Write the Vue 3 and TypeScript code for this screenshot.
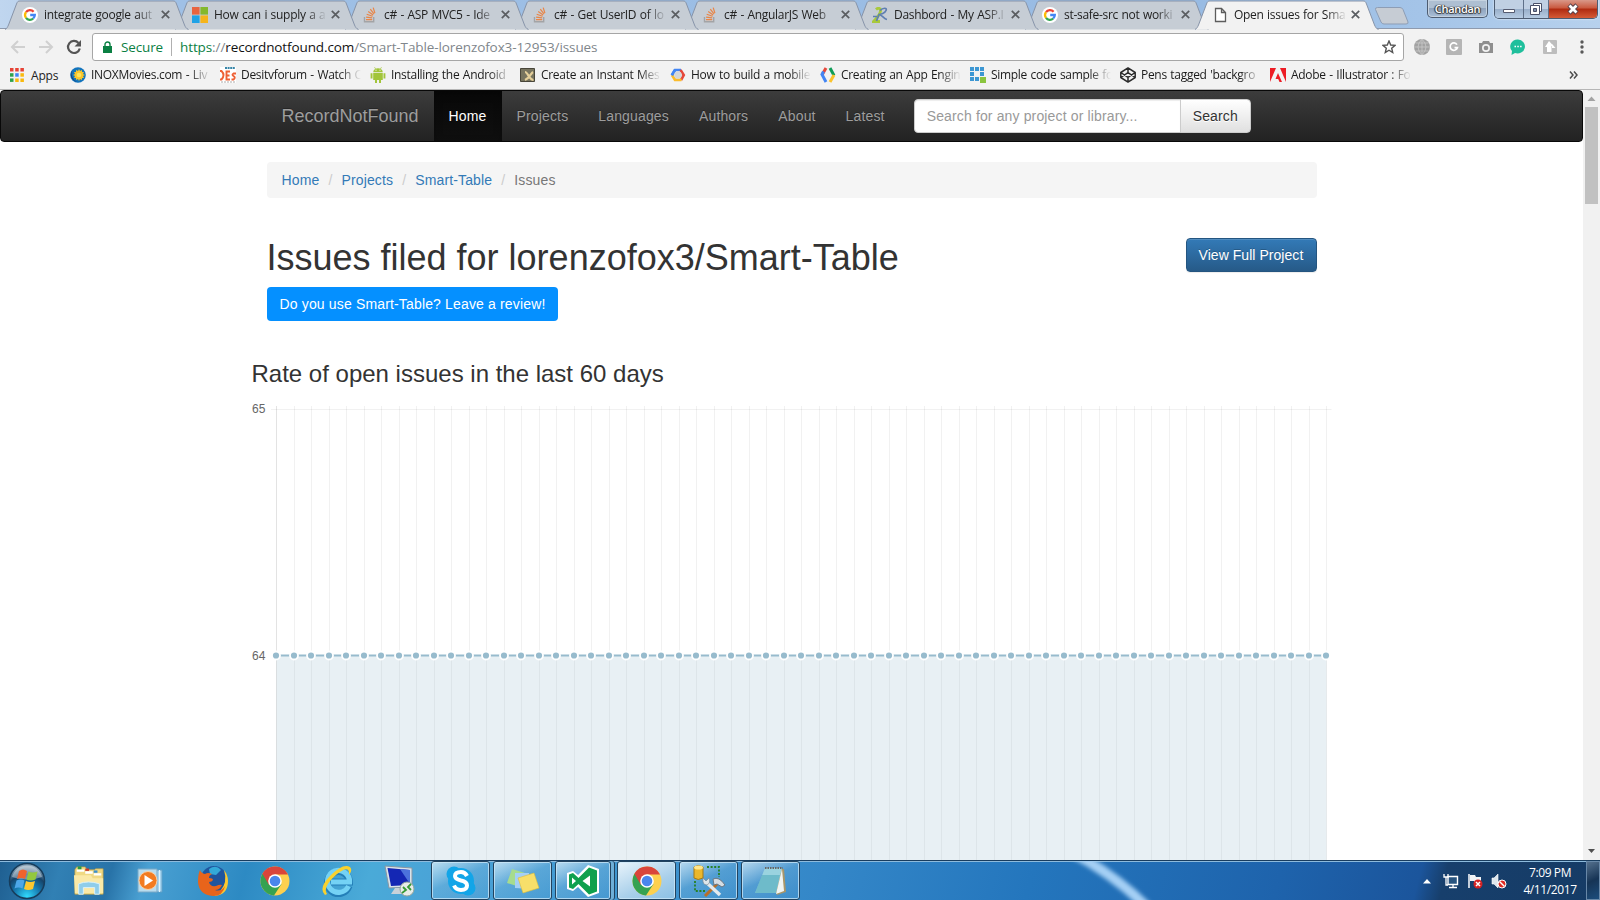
<script setup lang="ts">
interface Tab { icon: string; title: string }
interface Mark { icon: string; title: string }

const tabs: Tab[] = [
  { icon: 'google', title: 'integrate google aut' },
  { icon: 'ms', title: 'How can i supply a a' },
  { icon: 'so', title: 'c# - ASP MVC5 - Ide' },
  { icon: 'so', title: 'c# - Get UserID of lo' },
  { icon: 'so', title: 'c# - AngularJS Web' },
  { icon: 'dash', title: 'Dashbord - My ASP.I' },
  { icon: 'google', title: 'st-safe-src not worki' },
  { icon: 'page', title: 'Open issues for Sma' },
]
const marks: Mark[] = [
  { icon: 'inox', title: 'INOXMovies.com - Liv' },
  { icon: 'des', title: 'Desitvforum - Watch C' },
  { icon: 'android', title: 'Installing the Android' },
  { icon: 'xmark', title: 'Create an Instant Mes' },
  { icon: 'gcloud', title: 'How to build a mobile' },
  { icon: 'gdev', title: 'Creating an App Engin' },
  { icon: 'simple', title: 'Simple code sample fo' },
  { icon: 'codepen', title: "Pens tagged 'backgro" },
  { icon: 'adobe', title: 'Adobe - Illustrator : Fo' },
]
const nav = ['Home', 'Projects', 'Languages', 'Authors', 'About', 'Latest']
const points = Array.from({ length: 61 }, (_, i) => Math.round(24 + i * 17.5))
</script>

<template>
  <div class="screen">
    <svg class="defs" width="0" height="0">
      <defs>
        <symbol id="google" viewBox="0 0 16 16">
          <circle cx="8" cy="8" r="8" fill="#fff" />
          <g fill="none" stroke-width="2.3">
            <path d="M4 5.2A4.8 4.8 0 0 1 11.6 4.7" stroke="#ea4335" />
            <path d="M4 5.2A4.8 4.8 0 0 0 4 10.8" stroke="#fbbc05" />
            <path d="M4 10.8A4.8 4.8 0 0 0 11.2 11.5" stroke="#34a853" />
            <path d="M11.2 11.5A4.8 4.8 0 0 0 12.8 8H8.2" stroke="#4285f4" />
          </g>
        </symbol>
        <symbol id="ms" viewBox="0 0 16 16">
          <path d="M0 0h7.6v7.6H0z" fill="#e8643f" /><path d="M8.4 0H16v7.6H8.4z" fill="#84b82c" />
          <path d="M0 8.4h7.6V16H0z" fill="#1fa2e6" /><path d="M8.4 8.4H16V16H8.4z" fill="#f5b41b" />
        </symbol>
        <symbol id="so" viewBox="0 0 16 16">
          <path d="M2.5 10v4.8h9.2V10" fill="none" stroke="#a3a4a6" stroke-width="1.4" />
          <path d="M4 12.7h6.2M4.1 10.1l6.1.8M4.7 7.3l5.9 1.9M6.2 4.5l5 3.4M8.3 2.2l3.7 4.7M11.2.6l1.7 5.5" stroke="#e98546" stroke-width="1.2" />
        </symbol>
        <symbol id="dash" viewBox="0 0 16 16">
          <path d="M4 2.500c2-2 5-1.500 4.500 1.500C8 8 5 11 1.500 14.500L8 14.500" fill="none" stroke="#a8c93b" stroke-width="2.800" />
          <path d="M8 3.500C11 .5 15.500.5 14 3.500 13 6 9 7.500 6.500 7.500M1 9.500h4M8 8c2 0 4 4 7 4.500M7 7.500L4.500 14" fill="none" stroke="#5f7fb0" stroke-width="1.700" />
        </symbol>
        <symbol id="page" viewBox="0 0 16 16">
          <path d="M3.5 1.5h6l4 4v9h-10zM9.5 1.5v4h4" fill="#fff" stroke="#5d5d5d" stroke-width="1.3" />
        </symbol>
        <symbol id="inox" viewBox="0 0 16 16">
          <circle cx="8" cy="8" r="7.8" fill="#1374bd" /><path d="M2 3a8 8 0 0 0 5 12A10 10 0 0 1 2 3" fill="#173c74" />
          <path d="M9 2l1 2 2-1 0 2 2 0-1 2 2 1-2 1 1 2-2 0 0 2-2-1-1 2-1-2-2 1 0-2-2 0 1-2-2-1 2-1-1-2 2 0 0-2 2 1z" fill="#f8c52b" />
          <circle cx="9" cy="8" r="2.3" fill="#ffe45a" />
        </symbol>
        <symbol id="des" viewBox="0 0 16 16">
          <path d="M0 0h16v16H0z" fill="#fff" />
          <path d="M5 1h10" stroke="#3685a8" stroke-width="2" stroke-dasharray="2 .6" />
          <g fill="none" stroke="#ee6035" stroke-width="1.900">
            <path d="M0 4h1.500Q5.500 8 1.500 12.500H0M10 4.500H6.500v8H10M6.500 8.500h3M16 6.500h-2.500q-2 1 0 2.500 2.500 1.500 0 3.500H11.500" />
          </g>
          <path d="M1 15h14" stroke="#aaa" stroke-dasharray="2 1" />
        </symbol>
        <symbol id="android" viewBox="0 0 16 16">
          <path d="M3.2 5.3C3.4 0 12.600 0 12.800 5.300zM3.200 6h9.600v7H3.200zM5 12h2v4H5zM9 12h2v4H9zM.6 6.200h1.900v5.400H.6zM13.500 6.200h1.900v5.400h-1.900z" fill="#a2c53a" />
          <path d="M4.500.2l1.300 2M11.500.2l-1.300 2" stroke="#a2c53a" stroke-width=".7" />
          <path d="M5.500 3.200h1M9.500 3.200h1" stroke="#fff" />
        </symbol>
        <symbol id="xmark" viewBox="0 0 16 16">
          <path d="M.5 1.500h14v13H.5z" fill="#77745f" stroke="#49463a" /><path d="M5 5c3 0 4 8 8.500 8M13 5c-2 1-3 6-8 8" fill="none" stroke="#e4cf9a" stroke-width="2.200" />
        </symbol>
        <symbol id="gcloud" viewBox="0 0 16 16">
          <g fill="none" stroke-width="2.700"><path d="M2 8l3-5h6" stroke="#4285f4" /><path d="M10.500 3.100L13.700 8 11 13" stroke="#e5473a" /><path d="M11.500 12.900H5L2 8" stroke="#fbbc2c" /><path d="M1.800 8.400L5 3" stroke="#4285f4" /></g>
          <circle cx="8" cy="8" r="3.800" fill="#d5d7d9" />
        </symbol>
        <symbol id="gdev" viewBox="0 0 16 16">
          <g fill="none" stroke-width="3"><path d="M6 1L2 8" stroke="#e5473a" /><path d="M3.500 4.500L2 7.500 6 15" stroke="#4285f4" /><path d="M10 1l4 7.500" stroke="#0f9d58" /><path d="M14 8l-4 7" stroke="#fbc32c" /></g>
        </symbol>
        <symbol id="simple" viewBox="0 0 16 16">
          <path d="M0 0h4v4H0zM5 0h4v4H5zM10 0h4v4h-4zM0 5h4v4H0zM10 5h4v4h-4zM0 10h4v4H0zM5 10h4v4H5z" fill="#3c97d3" /><path d="M10 10h6v6h-6z" fill="#8bc53f" />
        </symbol>
        <symbol id="codepen" viewBox="0 0 16 16">
          <path d="M8 .9l7.200 4.600v5L8 15.100.8 10.500v-5zM8 .9v4.800M8 15.100v-4.800M.8 5.500L8 10.300l7.200-4.800M.8 10.500L8 5.700l7.200 4.800" fill="none" stroke="#2b2b2b" stroke-width="1.500" stroke-linejoin="round" />
        </symbol>
        <symbol id="adobe" viewBox="0 0 16 16">
          <path d="M0 1h6L0 15zM10 1h6v14zM8 6l4 9H9.500l-1.300-3H5.500z" fill="#ed1c24" />
        </symbol>
        <symbol id="chrome" viewBox="0 0 30 30">
          <circle cx="15" cy="15" r="14.500" fill="#fdd04f" />
          <path d="M15 15L2.400 7.800A14.500 14.500 0 0 0 14 29.500L21.500 18z" fill="#35a251" />
          <path d="M2.400 7.800A14.500 14.500 0 0 1 28 8.500H15L9 19z" fill="#d9453b" />
          <circle cx="15" cy="15" r="6.800" fill="#fff" /><circle cx="15" cy="15" r="5.300" fill="#4a86ec" />
        </symbol>
      </defs>
    </svg>

    <header class="titlebar">
      <ul class="tabs">
        <li v-for="(t, i) in tabs" :key="i" class="tab" :class="{ active: i === 7 }" :style="{ zIndex: i === 7 ? 20 : 10 - i }">
          <svg class="shape" width="184" height="29" viewBox="0 0 184 29">
            <path class="fill" d="M0 29.500C2 28.500 2.500 27 3.500 25L11.500 4C12.500 1.500 13 1 15 1H168C170 1 170.500 1.500 171.500 4L179.500 25C180.500 27 181 28.500 183.500 29.500" />
          </svg>
          <svg class="fav"><use :href="'#' + t.icon" /></svg>
          <span class="fade tab-title">{{ t.title }}</span>
          <svg class="close" viewBox="0 0 9 9"><path d="M.8.800l7.400 7.400M8.200.8L.8 8.200" stroke="#5b5e62" stroke-width="1.700" /></svg>
        </li>
      </ul>
      <svg class="newtab" width="36" height="20" viewBox="0 0 36 20"><path d="M3.500 1.500H26Q28 1.500 29 3.500L34 16Q34.500 18 32 18H10Q8 18 7 16L1.500 3.500Q1 1.500 3.500 1.500Z" fill="#c6ccd4" stroke="#8d9db5" /></svg>
      <div class="user">Chandan</div>
      <div class="winctl">
        <span class="wc"><svg width="14" height="12"><path d="M1.500 6.500h11v3h-11z" fill="#fff" stroke="#555b70" /></svg></span>
        <span class="wc mid"><svg width="14" height="14"><path d="M4.500 1.500h8v8h-8z" fill="#fff" stroke="#4a5068" /><path d="M1.500 3.500h9v9h-9z" fill="#fff" stroke="#4a5068" /><path d="M4.500 6.500h3v3h-3z" fill="#8191ad" stroke="#4a5068" /></svg></span>
        <span class="wc red"><svg width="14" height="12"><path d="M3 2l8 8M11 2l-8 8" stroke="#57414a" stroke-width="4.600" /><path d="M3.500 2.500l7 7M10.500 2.500l-7 7" stroke="#fff" stroke-width="2.800" /></svg></span>
      </div>
    </header>

    <div class="toolbar">
      <svg class="navicons" width="92" height="30" viewBox="0 0 92 30">
        <path d="M25 15H12.500M18 9l-6 6 6 6M39 15h12.500M46 9l6 6-6 6" fill="none" stroke="#d0d0d0" stroke-width="2" />
        <path d="M78.500 11A6 6 0 1 0 79.800 16.500" fill="none" stroke="#545454" stroke-width="2.200" /><path d="M81 8v6.500h-6.500z" fill="#545454" />
      </svg>
      <div class="address">
        <svg class="lock" width="9" height="12" viewBox="0 0 9 12"><path d="M0 5h9v7H0z" fill="#0b8043" /><path d="M2 6V3.500a2.500 2.500 0 0 1 5 0V6" fill="none" stroke="#0b8043" stroke-width="1.400" /></svg>
        <span class="secure">Secure</span>
        <span class="url"><i>https</i>://<b>recordnotfound.com</b>/Smart-Table-lorenzofox3-12953/issues</span>
        <svg class="star" width="14" height="14" viewBox="0 0 14 14"><path d="M7 1l1.700 4 4.300.4-3.300 2.800 1 4.300L7 10.200l-3.700 2.300 1-4.300L1 5.400 5.300 5z" fill="none" stroke="#555" stroke-width="1.400" /></svg>
      </div>
      <div class="ext">
        <svg viewBox="0 0 16 16"><circle cx="8" cy="8" r="8" fill="#a2a2a2" /><path d="M0 8h16M8 0v16M1.500 4h13M1.500 12h13M8 0q-8 8 0 16M8 0q8 8 0 16" stroke="#c9c9c9" stroke-width=".8" fill="none" /></svg>
        <svg viewBox="0 0 16 16"><rect width="16" height="16" rx="1" fill="#b5b5b5" /><path d="M11 5.600A3.700 3.700 0 1 0 11.400 8.700H8.500" stroke="#fff" stroke-width="1.700" fill="none" /></svg>
        <svg viewBox="0 0 16 16"><path d="M1 4h3l1-2h6l1 2h3v10H1z" fill="#8f8f8f" /><circle cx="8" cy="9" r="4" fill="#f2f2f2" /><circle cx="8" cy="9" r="2.300" fill="#8f8f8f" /></svg>
        <svg viewBox="0 0 16 16"><path d="M8 .5a7.500 7 0 1 1-3 13.600L1.500 16l.5-4A7.300 7 0 0 1 8 .5" fill="#1fbf9c" /><path d="M4.500 7.500h1.500M7.300 7.500h1.500M10.100 7.500h1.500" stroke="#fff" stroke-width="1.500" /></svg>
        <svg viewBox="0 0 16 16"><rect x="1" y="1" width="14" height="14" rx="1" fill="#bdbdbd" /><path d="M7 2l4.500 5H9.500v6H5V8H3z" fill="#fff" /><path d="M10 5l3.500 4H10z" fill="#fff" /></svg>
        <svg viewBox="0 0 16 16"><g fill="#595959"><circle cx="8" cy="3" r="1.700" /><circle cx="8" cy="8" r="1.700" /><circle cx="8" cy="13" r="1.700" /></g></svg>
      </div>
    </div>

    <div class="bookmarks">
      <svg class="apps" width="14" height="14" viewBox="0 0 14 14">
        <path d="M0 0h3.500v3.500H0zM5.200 0h3.500v3.500H5.200zM10.400 0h3.500v3.500h-3.500z" fill="#e64235" />
        <path d="M0 5.200h3.500v3.500H0z" fill="#2fa24c" /><path d="M5.200 5.200h3.500v3.500H5.200z" fill="#4285f4" /><path d="M10.400 5.200h3.500v3.500h-3.500z" fill="#f9b90d" />
        <path d="M0 10.400h3.500v3.500H0z" fill="#2fa24c" /><path d="M5.200 10.400h3.500v3.500H5.200zM10.400 10.400h3.500v3.500h-3.500z" fill="#f9b90d" />
      </svg>
      <span class="apps-label">Apps</span>
      <div v-for="m in marks" :key="m.title" class="mark">
        <svg class="fav"><use :href="'#' + m.icon" /></svg>
        <span class="fade mark-title">{{ m.title }}</span>
      </div>
      <svg class="more" width="9" height="8" viewBox="0 0 9 8"><path d="M1 .5L4 4 1 7.500M5 .5L8 4 5 7.500" fill="none" stroke="#4c4c4c" stroke-width="1.500" /></svg>
    </div>

    <div class="viewport">
      <main class="page">
        <nav class="navbar">
          <div class="container">
            <a class="brand">RecordNotFound</a>
            <a v-for="(n, i) in nav" :key="n" class="navlink" :class="{ on: i === 0 }">{{ n }}</a>
            <form class="search"><div class="input">Search for any project or library...</div><div class="go">Search</div></form>
          </div>
        </nav>
        <div class="container col">
          <ol class="crumb"><li><a>Home</a></li><li><a>Projects</a></li><li><a>Smart-Table</a></li><li>Issues</li></ol>
          <div class="head"><h1>Issues filed for lorenzofox3/Smart-Table</h1><a class="btn primary">View Full Project</a></div>
          <a class="btn review">Do you use Smart-Table? Leave a review!</a>
          <h3>Rate of open issues in the last 60 days</h3>
          <svg class="chart" width="1090" height="460" viewBox="0 0 1090 460">
            <g stroke="#000" stroke-opacity=".055">
              <path v-for="x in points" :key="x" :d="`M${x + 0.5} 6V460`" />
              <path d="M19 9.500H1079.500M24.500 6V460" />
            </g>
            <path d="M24.500 255.500H1074.500V460H24.500z" fill="#97bbcd" fill-opacity=".22" />
            <path d="M24 255.500H1074" stroke="#97bbcd" stroke-width="2" />
            <circle v-for="x in points" :key="x" :cx="x" cy="255.500" r="4" fill="#97bbcd" stroke="#fff" stroke-width="1.800" />
            <g class="axis"><text x="0" y="13">65</text><text x="0" y="260">64</text></g>
          </svg>
        </div>
      </main>
      <div class="scroll">
        <svg width="17" height="17"><path d="M4.500 11L8.500 6.500 12.500 11z" fill="#a3a3a3" /></svg>
        <div class="thumb"></div>
        <svg width="17" height="17"><path d="M5 6L8.500 10 12 6z" fill="#505050" /></svg>
      </div>
    </div>

    <footer class="taskbar">
      <svg class="sweep" width="500" height="40"><defs><filter id="soft"><feGaussianBlur stdDeviation="2" /></filter></defs><path d="M60 -10Q105 14 137 46" fill="none" stroke="#a5d0f5" stroke-width="10" filter="url(#soft)" /></svg>
      <div class="launch">
        <svg class="start" width="38" height="38" viewBox="0 0 38 38">
          <defs><radialGradient id="orb" cx=".5" cy=".95" r=".85"><stop offset="0" stop-color="#31dcff" /><stop offset=".45" stop-color="#1678ae" /><stop offset=".75" stop-color="#164369" /><stop offset="1" stop-color="#86a1b5" /></radialGradient></defs>
          <circle cx="19" cy="19" r="17.500" fill="url(#orb)" stroke="#173d5c" stroke-width="1.500" />
          <path d="M4 15A15.500 15.500 0 0 1 34 15Q19 20 4 15" fill="#fff" opacity=".38" />
          <path d="M11 9q4-3 8 0l-2 8q-4-2-8 0z" fill="#f0642c" /><path d="M20.500 9.500q4 2 9 0l-2 8q-5 2-9 0z" fill="#93c83e" />
          <path d="M8.500 18.500q4-2 8 0l-2 8q-4-2-8 0z" fill="#4da7e8" /><path d="M18 19q4 2 9 0l-2 8q-5 2-9 0z" fill="#fdc82f" />
        </svg>
        <svg class="i62" width="34" height="32" viewBox="0 0 34 32">
          <path d="M2 4l2-3h9l2 3h8l1-1h8v27H2z" fill="#f0d983" stroke="#b99c45" stroke-width=".7" /><path d="M4 5h8M13 7h8M22 9h8" stroke="#fff" stroke-width="2.500" /><path d="M5 2h4" stroke="#2a9c45" stroke-width="3" /><path d="M13 4h4" stroke="#c93a2a" stroke-width="2.500" /><path d="M22 6h4" stroke="#3a8fd0" stroke-width="2.500" />
          <path d="M1 10h18l2 3h11v16H2z" fill="#fae9a7" /><path d="M6 30V19q10-4 22 0v11h-5v-7H11v7z" fill="#8fcdea" stroke="#d7f1fd" />
        </svg>
        <svg class="i62" width="28" height="28" viewBox="0 0 28 28"><path d="M18 3h7v22h-7z" fill="#a8d4ee" stroke="#5f9ec6" /><path d="M1 2h19v23H1z" fill="#b9dcee" stroke="#79a8c6" /><circle cx="11" cy="13.500" r="9" fill="#f27b20" stroke="#fbd0a4" /><path d="M7.500 8l8.500 5.500L7.500 19z" fill="#fff" /><path d="M22.500 3v22" stroke="#e3f4fc" /></svg>
        <svg class="i62" width="32" height="32" viewBox="0 0 32 32">
          <circle cx="17" cy="14" r="13" fill="#1f559e" /><path d="M12 4q7-5 12 1l-5 5-6-1z" fill="#33a9d8" />
          <path d="M27 5q4 5 4 11 0 14-14 15 9-6 11-14 1-6-1-12z" fill="#fbc931" />
          <path d="M3 5q1 3 5 4 3-2 7 0-3 1-3 4 4 0 4 2-1 2-4 2 1 5 7 4 4-2 6-1-2 5-7 5 6 2 10-4-2 10-12 10Q2 30 1 17 1 9 3 5z" fill="#e8641b" />
        </svg>
        <svg class="i62" width="30" height="30"><use href="#chrome" /></svg>
        <svg class="i62" width="32" height="32" viewBox="0 0 32 32"><path d="M28 21A11 11 0 1 1 28.500 17H10" fill="none" stroke="#247fb8" stroke-width="7" /><path d="M27.500 21A11 11 0 1 1 28.500 17H10" fill="none" stroke="#74d2f5" stroke-width="5.200" /><path d="M4 30Q-3 23 9 11 22-2 29 2q3 3-1 8Q29-1 16 9 1 22 6 29z" fill="#f8d12e" /></svg>
        <svg class="i62" width="32" height="34" viewBox="0 0 32 34"><path d="M2 2l27 2v19L6 24z" fill="#d9e3e9" stroke="#8696a4" /><path d="M4.500 4l22.500 2v15L8 22z" fill="#1427b4" /><path d="M17 5l10 1v14z" fill="#4b72dc" /><path d="M12 24h10l3 6H8z" fill="#c8d2d9" /><circle cx="24" cy="25" r="7" fill="#e7ece8" stroke="#93a59c" /><path d="M20 23l3 3-4 3M28 20l-3 3 3 3" stroke="#369a36" stroke-width="1.800" fill="none" /></svg>
      </div>
      <div class="apps-open">
        <div class="task"><svg width="32" height="32" viewBox="0 0 32 32"><circle cx="9" cy="9" r="7.500" fill="#12a5e8" /><circle cx="23" cy="23" r="7.500" fill="#12a5e8" /><circle cx="16" cy="16" r="13" fill="#12a5e8" /><path d="M22 11q-2-4-6-4-6 0-6 4 0 3 6 4.500 6 1.200 6 5 0 4.500-6 4.500-5 0-7-4.500" fill="none" stroke="#fff" stroke-width="4" /></svg></div>
        <div class="task"><svg width="34" height="30" viewBox="0 0 34 30"><path d="M6 3l13 4-5 14L1 17z" fill="#a6dc8e" /><path d="M9 7h14l1 16-15-1z" fill="#a4d0f5" /><path d="M12 12l16-5 5 15-16 5z" fill="#f7df6a" stroke="#d9bd3d" stroke-width=".6" /></svg></div>
        <div class="task vs"><svg width="34" height="34" viewBox="0 0 34 34"><path d="M1 9l6-2 5 4L22 1l11 4v24l-11 4-10-10-5 4-6-2z" fill="#fff" /><path d="M3 10.500l4-1.500 5.500 5L23 3.500 31 6.500v21L23 30.500 12.500 20 7 25l-4-1.500z" fill="#0fa04d" /><path d="M6 13.500v7l4-3.500zM24 11.500v11L16.500 17z" fill="#fff" /></svg></div>
        <div class="task hot"><svg width="30" height="30"><use href="#chrome" /></svg></div>
        <div class="task"><svg width="34" height="34" viewBox="0 0 34 34"><path d="M2 3q4-3 9 0v11q-5 3-9 0z" fill="#eab72c" stroke="#a37815" /><ellipse cx="6.500" cy="3.500" rx="4.500" ry="2" fill="#ffe58a" /><path d="M15 3h12v10M3 17v10h11" fill="none" stroke="#278125" stroke-width="1.800" stroke-dasharray="2 1.600" /><path d="M27 18L13 32" stroke="#b96f28" stroke-width="3" /><path d="M21 15q6-3 12 6l-3 2-5-3-3 1z" fill="#d5dde4" stroke="#697785" /><path d="M14 18l14 13" stroke="#e3e9ed" stroke-width="3.500" /><path d="M11 14l3 3 3-3q2 5-2 7-5 0-4-7z" fill="#dfe6ea" stroke="#7c8994" stroke-width=".7" /></svg></div>
        <div class="task"><svg width="34" height="32" viewBox="0 0 34 32"><path d="M12 4h18l2 23-9 3z" fill="#a99669" /><path d="M11 3h17L22 28H1z" fill="#9ad3df" /><path d="M8 10h18l-4 18H1z" fill="#4aa8b8" opacity=".55" /><path d="M28 4l2 22-8 3z" fill="#f1f5f4" /><path d="M11 3h18" stroke="#666" stroke-width="2" stroke-dasharray="1.500 1" /></svg></div>
      </div>
      <div class="tray">
        <svg width="10" height="6" class="up"><path d="M1 5.500L5 1l4 4.500z" fill="#fff" /></svg>
        <svg width="16" height="16" viewBox="0 0 16 16"><path d="M5 3.500h9.500v8H5z" fill="#28547f" stroke="#fff" stroke-width="1.400" /><path d="M6 14.500h8M10 12v2M1 1v3h4V1M3 4v8h2" stroke="#fff" stroke-width="1.300" fill="none" /></svg>
        <svg width="16" height="16" viewBox="0 0 16 16"><path d="M2 1v14" stroke="#fff" stroke-width="1.500" /><path d="M3 2h5l1 2h5v6H8L7 8H3z" fill="#f2f4f6" /><circle cx="11" cy="11" r="4.500" fill="#d62222" /><path d="M9 9l4 4M13 9l-4 4" stroke="#fff" stroke-width="1.500" /></svg>
        <svg width="16" height="16" viewBox="0 0 16 16"><path d="M1 5h2l4-4v14l-4-4H1z" fill="#dfe7ed" stroke="#fff" stroke-width=".6" /><circle cx="11" cy="11" r="4" fill="#e02a22" stroke="#fff" /><path d="M8.500 8.500l5 5" stroke="#fff" stroke-width="1.400" /></svg>
        <div class="clock"><span>7:09 PM</span><span>4/11/2017</span></div>
      </div>
      <div class="peek"></div>
    </footer>
  </div>
</template>

<style>
body { margin: 0; overflow: hidden; }
</style>

<style scoped>
* { box-sizing: border-box; }
.screen { width: 1600px; height: 900px; display: flex; flex-direction: column; overflow: hidden; background: #fff; font-family: "Open Sans", "Noto Sans", sans-serif; font-size: 12px; color: #222; }
.defs { position: absolute; }
svg { display: block; flex: none; }
.titlebar { height: 29px; flex: none; display: flex; background: linear-gradient(90deg, #c0d6ef 0, #9fc0e6 180px, #98bbe3 1200px, #a4c4e8 1420px, #b7d1ed 1600px); border-bottom: 1px solid #8e9aae; }
.tabs { display: flex; list-style: none; margin: 0; padding: 0 0 0 5px; }
.tab { position: relative; width: 170px; height: 29px; display: flex; align-items: center; padding-left: 17px; }
.shape { position: absolute; left: 0; top: 0; overflow: visible; }
.shape .fill { fill: #c6cdd5; stroke: #8794a9; stroke-width: 1; }
.tab.active .fill { fill: #f2f2f2; }
.fav { position: relative; width: 16px; height: 16px; }
.fade { overflow: hidden; white-space: nowrap; -webkit-mask-image: linear-gradient(90deg, #000 82%, transparent); mask-image: linear-gradient(90deg, #000 82%, transparent); }
.tab-title { position: relative; margin-left: 6px; width: 113px; line-height: 18px; letter-spacing: -.3px; word-spacing: .7px; }
.close { position: relative; margin-left: 4px; width: 9px; height: 9px; }
.newtab { margin: 6px 0 0 9px; }
.user { margin: 0 0 0 17px; width: 61px; height: 18px; border: 1px solid #4d5c71; border-top: 0; border-radius: 0 0 5px 5px; background: linear-gradient(#aebfd2 45%, #8fa3bd 50%, #a9bfd8); box-shadow: inset 0 0 0 1px #c5d2e0; color: #fff; text-align: center; line-height: 17px; font-size: 11px; letter-spacing: -.3px; font-weight: 600; text-shadow: 0 0 1px #333, 0 1px 1px #333, 1px 0 1px #333, -1px 0 1px #333; }
.winctl { margin-left: 6px; display: flex; width: 104px; height: 19px; border: 1px solid #4d5c71; border-top: 0; border-radius: 0 0 5px 5px; overflow: hidden; box-shadow: 0 0 2px #fff; }
.wc { width: 28px; display: flex; align-items: center; justify-content: center; background: linear-gradient(#c0d0e3 50%, #98aec9 50%, #b6cbe2); }
.mid { border-left: 1px solid #5f7088; border-right: 1px solid #5f7088; width: 27px; }
.red { width: 48px; background: linear-gradient(#d99889, #c9583e 45%, #af2a10 50%, #d55b36); }
.toolbar { height: 34px; flex: none; background: #f2f2f2; display: flex; align-items: center; padding-top: 2px; }
.navicons { margin-bottom: 1px; }
.address { width: 1312px; height: 28px; border: 1px solid #a6a6a6; border-radius: 3px; background: #fff; display: flex; align-items: center; color: #80868b; margin-bottom: 1px; }
.lock { margin-left: 10px; }
.secure { margin-left: 9px; width: 51px; height: 18px; line-height: 18px; border-right: 1px solid #b0b0b0; color: #0b8043; font-size: 13.500px; letter-spacing: -.15px; }
.url { margin-left: 8px; letter-spacing: -.1px; font-size: 13.500px; }
.url i { font-style: normal; color: #0b8043; }
.url b { font-weight: 400; color: #111; }
.star { margin-left: auto; margin-right: 7px; }
.ext { display: flex; gap: 16px; margin-left: 10px; margin-bottom: 1px; }
.ext svg { width: 16px; height: 16px; }
.bookmarks { height: 27px; flex: none; display: flex; align-items: center; background: #f2f2f2; border-bottom: 1px solid #b6b6b6; padding: 0 0 2px 10px; }
.apps-label { margin-left: 7px; width: 39px; letter-spacing: -.2px; }
.mark { width: 150px; display: flex; align-items: center; }
.mark-title { margin-left: 5px; width: 120px; line-height: 18px; letter-spacing: -.3px; word-spacing: .7px; color: #1b1b1b; }
.more { margin-left: 149px; }
.viewport { height: 770px; flex: none; display: flex; font-family: "Liberation Sans", Arial, sans-serif; font-size: 14px; line-height: 20px; color: #333; }
.page { width: 1583px; overflow: hidden; }
.navbar { height: 52px; border: 1px solid #080808; border-radius: 4px; background: linear-gradient(#3c3c3c, #222); margin-bottom: 20px; }
.container { width: 1080px; margin: 0 auto; padding: 0 15px; }
.navbar .container { display: flex; height: 50px; }
.brand { padding: 15px; font-size: 18px; color: #9d9d9d; text-shadow: 0 -1px 0 rgba(0,0,0,.25); }
.navlink { padding: 15px; color: #9d9d9d; letter-spacing: .15px; text-shadow: 0 -1px 0 rgba(0,0,0,.25); }
.navlink.on { color: #fff; background: linear-gradient(#080808, #0f0f0f); box-shadow: inset 0 3px 9px rgba(0,0,0,.25); }
.search { display: flex; margin: 8px 0 0 14px; height: 34px; letter-spacing: .14px; }
.input { width: 267px; border: 1px solid #ccc; border-radius: 4px 0 0 4px; background: #fff; color: #999; padding: 6px 12px; box-shadow: inset 0 1px 1px rgba(0,0,0,.075); }
.go { margin-left: -1px; border: 1px solid #ccc; border-radius: 0 4px 4px 0; padding: 6px 12px; color: #333; background: linear-gradient(#fff, #e0e0e0); text-shadow: 0 1px 0 #fff; }
.crumb { list-style: none; display: flex; margin: 0; height: 36px; padding: 8px 15px; background: #f5f5f5; border-radius: 4px; color: #777; letter-spacing: .14px; }
.crumb a { color: #337ab7; }
.crumb li + li::before { content: "/"; padding: 0 9px; color: #ccc; }
.head { display: flex; justify-content: space-between; height: 79px; margin-top: 10px; padding-top: 30px; }
h1 { margin: 0; font-size: 36px; line-height: 39px; font-weight: 400; }
.btn { height: 34px; border-radius: 4px; padding: 7px 13px; color: #fff; display: inline-block; }
.primary { width: 131px; border: 1px solid #245580; padding: 6px 0 6px 12px; letter-spacing: .05px; background: linear-gradient(#337ab7, #265a88); box-shadow: inset 0 1px 0 rgba(255,255,255,.15), 0 1px 1px rgba(0,0,0,.075); text-shadow: 0 -1px 0 rgba(0,0,0,.2); }
.review { background: #0590ff; display: table; letter-spacing: .155px; }
h3 { margin: 40px 0 0 -15px; font-size: 24px; line-height: 26px; font-weight: 400; }
.chart { margin: 13px 0 0 -15px; }
.axis { font-size: 12px; fill: #666; }
.scroll { width: 17px; background: #f1f1f1; display: flex; flex-direction: column; align-items: center; }
.thumb { width: 13px; height: 97px; background: #c1c1c1; margin-bottom: auto; }
.taskbar { position: relative; height: 40px; flex: none; display: flex; overflow: hidden; border-top: 1px solid #193d5f; box-shadow: inset 0 1px 0 #8dbbdd; background: linear-gradient(105deg, #1f5f91 0, #3180b4 60px, #2873a8 110px, #4aa0d2 145px, #2d8ac3 240px, #4aaad8 360px, #4aa3d7 430px, #3487c8 800px, #2476bd 1000px, #1e63ac 1240px, #1b559c 1375px, #173f6c 1400px, #153a63 1600px); }
.sweep { position: absolute; left: 1010px; top: 0; }
.launch { width: 431px; display: flex; align-items: center; position: relative; padding-left: 8px; }
.launch .i62 { margin: 0 15px; width: 32px; }
.launch .start + .i62 { margin-left: 27px; }
.apps-open { display: flex; gap: 3px; position: relative; }
.task { width: 59px; height: 39px; display: flex; align-items: center; justify-content: center; border: 1px solid #22435f; border-radius: 3px; box-shadow: inset 0 0 0 1px rgba(205,232,248,.75); background: linear-gradient(155deg, rgba(225,241,250,.75), rgba(130,187,224,.35) 45%, rgba(90,160,210,.2)); }
.vs { width: 56px; margin-right: 3px; box-shadow: inset 0 0 0 1px rgba(205,232,248,.75), 3px 0 0 #6eafd8, 4px 0 0 #22435f; }
.hot { background: linear-gradient(155deg, #e9f4fb, #a8cfea 60%, #8bc0e4); }
.tray { position: relative; margin-left: auto; display: flex; align-items: center; gap: 8px; color: #fff; }
.up { margin-right: 3px; }
.clock { width: 70px; margin: 1px 0 0 0; display: flex; flex-direction: column; align-items: center; line-height: 17px; letter-spacing: -.4px; }
.peek { position: relative; margin-left: 1px; width: 14px; border: 1px solid #6888a8; background: linear-gradient(155deg, #54708d, #163455 50%, #1d4d7c); }
</style>
